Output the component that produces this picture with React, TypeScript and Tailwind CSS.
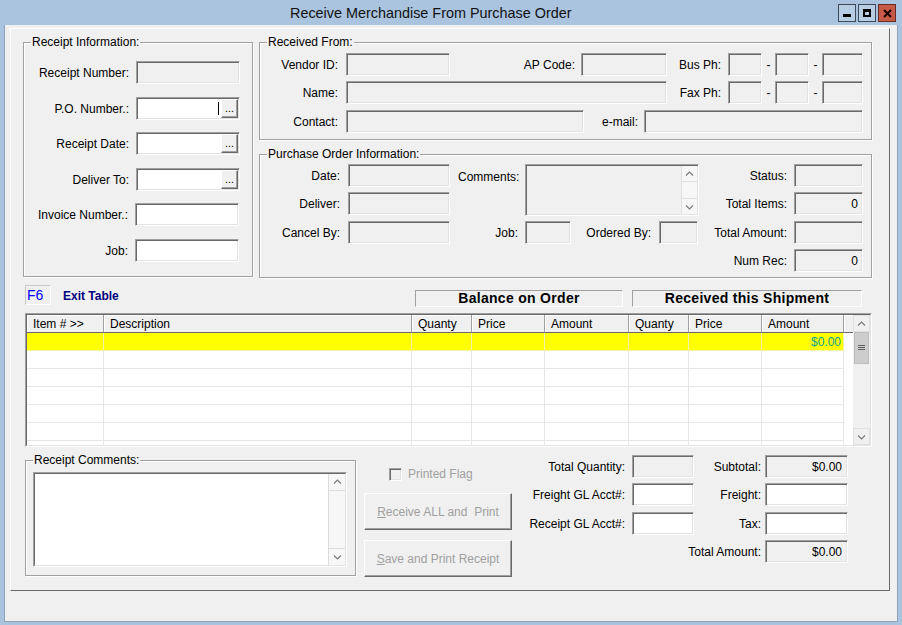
import React from "react";

// classic 3D borders
const sunken =
  "border border-t-[#a0a0a0] border-l-[#a0a0a0] border-b-white border-r-white shadow-[inset_1px_1px_0_#696969,inset_-1px_-1px_0_#e3e3e3]";
const raised =
  "border border-t-white border-l-white border-b-[#696969] border-r-[#696969] shadow-[inset_-1px_-1px_0_#a0a0a0]";

function Field({
  className = "",
  white = false,
  value,
}: {
  className?: string;
  white?: boolean;
  value?: string;
}) {
  return (
    <div
      className={`${sunken} h-[23px] shrink-0 flex items-center justify-end pr-[4px] ${
        white ? "bg-white" : "bg-[#f0f0f0]"
      } ${className}`}
    >
      {value}
    </div>
  );
}

function GroupBox({
  title,
  className = "",
  children,
}: {
  title: string;
  className?: string;
  children?: React.ReactNode;
}) {
  return (
    <div className={`border border-[#a0a0a0] shadow-[inset_1px_1px_0_#fff,1px_1px_0_#fff] ${className}`}>
      <div className="-mt-[8px] ml-[7px] w-fit bg-[#f0f0f0] px-[1px] leading-[14px]">{title}</div>
      {children}
    </div>
  );
}

function Chevron({ down = false }: { down?: boolean }) {
  return (
    <svg width="9" height="6" viewBox="0 0 9 6">
      <path d={down ? "M1 1.5 L4.5 5 L8 1.5" : "M1 4.5 L4.5 1 L8 4.5"} fill="none" stroke="#7a7a7a" strokeWidth="1.2" />
    </svg>
  );
}

function PickField({ caret = false }: { caret?: boolean }) {
  return (
    <div className={`${sunken} ml-[7px] w-[104px] h-[23px] bg-white flex justify-end items-stretch p-[1px]`}>
      {caret && <div className="w-[1px] bg-black my-[3px] mr-[2px]" />}
      <div className={`${raised} w-[17px] bg-[#f0f0f0] flex items-end justify-center text-[11px] leading-[11px] pb-[3px]`}>
        ...
      </div>
    </div>
  );
}

function Phone() {
  return (
    <>
      <Field className="ml-[7px] w-[34px]" />
      <div className="w-[13px] text-center">-</div>
      <Field className="w-[34px]" />
      <div className="w-[13px] text-center">-</div>
      <Field className="w-[41px]" />
    </>
  );
}

const cols = [
  { w: "w-[77px]", label: "Item # >>" },
  { w: "w-[308px]", label: "Description" },
  { w: "w-[60px]", label: "Quanty" },
  { w: "w-[73px]", label: "Price" },
  { w: "w-[84px]", label: "Amount" },
  { w: "w-[60px]", label: "Quanty" },
  { w: "w-[73px]", label: "Price" },
  { w: "w-[82px]", label: "Amount" },
];

function ItemGrid() {
  return (
    <div className="ml-[14px] mt-[6px] w-[847px] h-[134px] border border-t-[#a0a0a0] border-l-[#a0a0a0] border-b-white border-r-white">
      <div className="h-full border border-t-[#696969] border-l-[#696969] border-b-[#e3e3e3] border-r-[#e3e3e3] flex bg-white">
        <div className="w-[826px] overflow-hidden">
          <div className="flex h-[18px] bg-[#f0f0f0]">
            {cols.map((c, i) => (
              <div
                key={i}
                className={`${c.w} shrink-0 border-r border-r-[#a0a0a0] border-b border-b-[#696969] shadow-[inset_1px_1px_0_#fff] pl-[6px] pt-[1px] leading-[17px]`}
              >
                {c.label}
              </div>
            ))}
            <div className="w-[9px] shrink-0 border-b border-b-[#696969] shadow-[inset_1px_1px_0_#fff]" />
          </div>
          {Array.from({ length: 7 }).map((_, r) => (
            <div key={r} className="flex h-[18px]">
              {cols.map((c, i) => (
                <div
                  key={i}
                  className={`${c.w} shrink-0 border-r border-b ${
                    r === 0 ? "bg-[#ffff00] border-[#f2f2a8]" : "border-[#e6e6e6]"
                  } flex items-center justify-end pr-[2px] text-[#12a08c]`}
                >
                  {r === 0 && i === 7 ? "$0.00" : ""}
                </div>
              ))}
              <div className="w-[9px] shrink-0" />
            </div>
          ))}
        </div>
        {/* scrollbar */}
        <div className="w-[17px] flex flex-col bg-[#f0f0f0]">
          <div className="h-[17px] flex items-center justify-center border border-[#e0e0e0] bg-[#f0f0f0]">
            <Chevron />
          </div>
          <div className="h-[32px] mx-[1px] bg-[#cdcdcd] border border-[#bdbdbd] flex items-center justify-center">
            <svg width="7" height="6" viewBox="0 0 7 6">
              <path d="M0 0.5H7M0 2.5H7M0 4.5H7" stroke="#606060" strokeWidth="1" />
            </svg>
          </div>
          <div className="flex-1" />
          <div className="h-[17px] flex items-center justify-center border border-[#e0e0e0]">
            <Chevron down />
          </div>
        </div>
      </div>
    </div>
  );
}

export default function App() {
  return (
    <div className="w-[902px] h-[625px] bg-[#aac4df] flex flex-col px-[4px] pb-[3px] font-['Liberation_Sans',Arial,sans-serif] text-[12px] text-black">
      {/* title bar */}
      <div className="h-[25px] flex items-start shrink-0">
        <div className="pl-[286px] pt-[5px] text-[14.4px] leading-[17px] text-[#111]">
          Receive Merchandise From Purchase Order
        </div>
        <div className="flex-1" />
        <div className="flex gap-[2px] mt-[4px] mr-[2px]">
          <div className="w-[18px] h-[18px] border border-[#3c4a5a] bg-[#b7cde4] flex items-end justify-center pb-[4px]">
            <div className="w-[8px] h-[3px] bg-black" />
          </div>
          <div className="w-[18px] h-[18px] border border-[#3c4a5a] bg-[#b7cde4] flex items-center justify-center">
            <div className="w-[8px] h-[8px] border-2 border-black border-t-[3px]" />
          </div>
          <div className="w-[18px] h-[18px] border border-[#6a2a22] bg-[#c75a46] flex items-center justify-center">
            <svg width="9" height="9" viewBox="0 0 9 9">
              <path d="M1 1L8 8M8 1L1 8" stroke="#1a0000" strokeWidth="2" />
            </svg>
          </div>
        </div>
      </div>

      {/* client area */}
      <div className="flex-1 bg-[#f0f0f0] border-l border-r border-b border-[#8ea3ba] flex flex-col">
        <div className="ml-[5px] mt-[3px] w-[880px] h-[563px] border border-t-white border-l-white border-r-[#696969] border-b-[#696969] flex flex-col">
          {/* top section */}
          <div className="flex mt-[13px]">
            <GroupBox title="Receipt Information:" className="ml-[12px] w-[230px] h-[235px]">
              <div className="flex items-center mt-[12px]">
                <div className="w-[105px] text-right">Receipt Number:</div>
                <Field className="ml-[7px] w-[104px]" />
              </div>
              <div className="flex items-center mt-[13px]">
                <div className="w-[105px] text-right">P.O. Number.:</div>
                <PickField caret />
              </div>
              <div className="flex items-center mt-[12px]">
                <div className="w-[105px] text-right">Receipt Date:</div>
                <PickField />
              </div>
              <div className="flex items-center mt-[13px]">
                <div className="w-[105px] text-right">Deliver To:</div>
                <PickField />
              </div>
              <div className="flex items-center mt-[12px]">
                <div className="w-[104px] text-right">Invoice Number.:</div>
                <Field white className="ml-[7px] w-[104px]" />
              </div>
              <div className="flex items-center mt-[13px]">
                <div className="w-[104px] text-right">Job:</div>
                <Field white className="ml-[7px] w-[104px]" />
              </div>
            </GroupBox>

            <div className="flex flex-col ml-[6px]">
              <GroupBox title="Received From:" className="w-[613px] h-[98px]">
                <div className="flex items-center mt-[4px]">
                  <div className="w-[78px] text-right">Vendor ID:</div>
                  <Field className="ml-[8px] w-[104px]" />
                  <div className="w-[125px] text-right">AP Code:</div>
                  <Field className="ml-[6px] w-[86px]" />
                  <div className="w-[54px] text-right">Bus Ph:</div>
                  <Phone />
                </div>
                <div className="flex items-center mt-[5px]">
                  <div className="w-[78px] text-right">Name:</div>
                  <Field className="ml-[8px] w-[321px]" />
                  <div className="w-[54px] text-right">Fax Ph:</div>
                  <Phone />
                </div>
                <div className="flex items-center mt-[6px]">
                  <div className="w-[78px] text-right">Contact:</div>
                  <Field className="ml-[8px] w-[238px]" />
                  <div className="w-[54px] text-right">e-mail:</div>
                  <Field className="ml-[6px] w-[219px]" />
                </div>
              </GroupBox>

              <GroupBox title="Purchase Order Information:" className="mt-[14px] w-[613px] h-[124px]">
                <div className="flex mt-[3px]">
                  {/* date / deliver / cancel */}
                  <div className="flex flex-col w-[190px]">
                    <div className="flex items-center">
                      <div className="w-[80px] text-right">Date:</div>
                      <Field className="ml-[8px] w-[102px]" />
                    </div>
                    <div className="flex items-center mt-[5px]">
                      <div className="w-[80px] text-right">Deliver:</div>
                      <Field className="ml-[8px] w-[102px]" />
                    </div>
                    <div className="flex items-center mt-[6px]">
                      <div className="w-[80px] text-right">Cancel By:</div>
                      <Field className="ml-[8px] w-[102px]" />
                    </div>
                  </div>
                  {/* comments / job / ordered by */}
                  <div className="flex flex-col w-[249px]">
                    <div className="flex">
                      <div className="w-[70px] pl-[8px] pt-[4px]">Comments:</div>
                      <div className={`${sunken} ml-[5px] w-[174px] h-[52px] bg-[#f0f0f0] flex justify-end p-[1px]`}>
                        <div className="w-[16px] flex flex-col bg-[#f7f7f7] border-l border-[#e0e0e0]">
                          <div className="h-[16px] flex items-center justify-center border-b border-[#e0e0e0]">
                            <Chevron />
                          </div>
                          <div className="flex-1" />
                          <div className="h-[16px] flex items-center justify-center border-t border-[#e0e0e0]">
                            <Chevron down />
                          </div>
                        </div>
                      </div>
                    </div>
                    <div className="flex items-center mt-[5px]">
                      <div className="w-[68px] text-right">Job:</div>
                      <Field className="ml-[7px] w-[46px]" />
                      <div className="w-[80px] text-right">Ordered By:</div>
                      <Field className="ml-[8px] w-[39px]" />
                    </div>
                  </div>
                  {/* status */}
                  <div className="flex flex-col">
                    <div className="flex items-center">
                      <div className="w-[88px] text-right">Status:</div>
                      <Field className="ml-[7px] w-[69px]" />
                    </div>
                    <div className="flex items-center mt-[5px]">
                      <div className="w-[88px] text-right">Total Items:</div>
                      <Field className="ml-[7px] w-[69px]" value="0" />
                    </div>
                    <div className="flex items-center mt-[6px]">
                      <div className="w-[88px] text-right">Total Amount:</div>
                      <Field className="ml-[7px] w-[69px]" />
                    </div>
                    <div className="flex items-center mt-[5px]">
                      <div className="w-[88px] text-right">Num Rec:</div>
                      <Field className="ml-[7px] w-[69px]" value="0" />
                    </div>
                  </div>
                </div>
              </GroupBox>
            </div>
          </div>

          {/* F6 / headings row */}
          <div className="flex items-start mt-[7px] ml-[14px]">
            <div className="w-[26px] h-[20px] border border-t-[#c8c8c8] border-l-[#c8c8c8] border-b-white border-r-white text-[14px] leading-[18px] pl-[1px] text-[#0000ff]">
              F6
            </div>
            <div className="ml-[12px] w-[352px] mt-[4px] font-bold text-[#000080] leading-[14px]">Exit Table</div>
            <div className="mt-[5px] w-[208px] h-[17px] border border-t-[#a0a0a0] border-l-[#a0a0a0] border-b-white border-r-white flex items-center justify-center font-bold text-[14px] tracking-[0.3px]">
              Balance on Order
            </div>
            <div className="ml-[9px] mt-[5px] w-[230px] h-[17px] border border-t-[#a0a0a0] border-l-[#a0a0a0] border-b-white border-r-white flex items-center justify-center font-bold text-[14px] tracking-[0.3px]">
              Received this Shipment
            </div>
          </div>

          <ItemGrid />

          {/* bottom section */}
          <div className="flex items-start mt-[8px]">
            <GroupBox title="Receipt Comments:" className="ml-[14px] mt-[5px] w-[331px] h-[116px]">
              <div className="ml-[7px] mt-[5px] w-[314px] h-[95px] border border-t-[#a0a0a0] border-l-[#a0a0a0] border-b-white border-r-white">
                <div className="h-full border border-t-[#696969] border-l-[#696969] border-b-[#e3e3e3] border-r-[#e3e3e3] bg-white flex justify-end">
                  <div className="w-[17px] flex flex-col bg-[#f7f7f7] border-l border-[#dcdcdc]">
                    <div className="h-[17px] flex items-center justify-center border-b border-[#dcdcdc]">
                      <Chevron />
                    </div>
                    <div className="flex-1" />
                    <div className="h-[17px] flex items-center justify-center border-t border-[#dcdcdc]">
                      <Chevron down />
                    </div>
                  </div>
                </div>
              </div>
            </GroupBox>

            <div className="w-[156px] pl-[8px] flex flex-col">
              <div className="flex items-center mt-[13px] ml-[25px]">
                <div className={`${sunken} w-[13px] h-[13px] bg-[#f0f0f0]`} />
                <span className="ml-[6px] text-[#a0a0a0] leading-[13px]">Printed Flag</span>
              </div>
              <button
                className={`${raised} mt-[12px] w-[148px] h-[37px] bg-[#f0f0f0] text-[#a0a0a0] text-[12px]`}
              >
                <span className="underline">R</span>eceive ALL and&nbsp; Print
              </button>
              <button
                className={`${raised} mt-[10px] w-[148px] h-[37px] bg-[#f0f0f0] text-[#a0a0a0] text-[12px]`}
              >
                <span className="underline">S</span>ave and Print Receipt
              </button>
            </div>

            <div className="flex flex-col">
              <div className="flex items-center">
                <div className="w-[113px] text-right">Total Quantity:</div>
                <Field className="ml-[7px] w-[62px]" />
                <div className="w-[67px] text-right">Subtotal:</div>
                <Field className="ml-[4px] w-[83px] pr-[5px]" value="$0.00" />
              </div>
              <div className="flex items-center mt-[5px]">
                <div className="w-[113px] text-right">Freight GL Acct#:</div>
                <Field white className="ml-[7px] w-[62px]" />
                <div className="w-[67px] text-right">Freight:</div>
                <Field white className="ml-[4px] w-[83px]" />
              </div>
              <div className="flex items-center mt-[6px]">
                <div className="w-[113px] text-right">Receipt GL Acct#:</div>
                <Field white className="ml-[7px] w-[62px]" />
                <div className="w-[67px] text-right">Tax:</div>
                <Field white className="ml-[4px] w-[83px]" />
              </div>
              <div className="flex items-center mt-[5px]">
                <div className="w-[249px] text-right">Total Amount:</div>
                <Field className="ml-[4px] w-[83px] pr-[5px]" value="$0.00" />
              </div>
            </div>
          </div>
        </div>
      </div>
    </div>
  );
}
